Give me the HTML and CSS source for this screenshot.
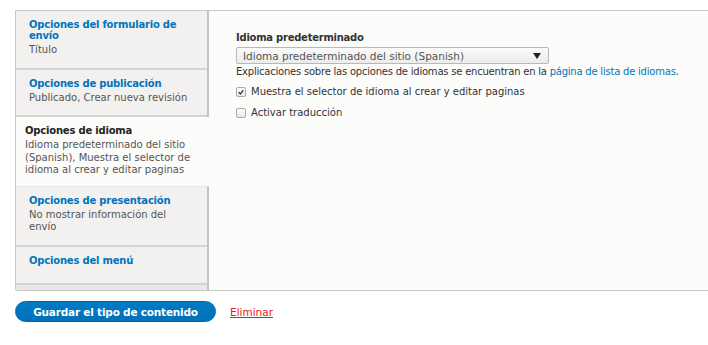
FILE: index.html
```html
<!DOCTYPE html>
<html lang="es">
<head>
<meta charset="utf-8">
<link rel="stylesheet" href="styles.css">
</head>
<body>
<div class="page">
  <div class="vtabs">
    <ul class="tabs">
      <li class="tab"><a class="tab-title" href="#">Opciones del formulario de envío</a><span class="tab-summary">Título</span></li>
      <li class="tab"><a class="tab-title" href="#">Opciones de publicación</a><span class="tab-summary">Publicado, Crear nueva revisión</span></li>
      <li class="tab active"><a class="tab-title" href="#">Opciones de idioma</a><span class="tab-summary">Idioma predeterminado del sitio (Spanish), Muestra el selector de idioma al crear y editar paginas</span></li>
      <li class="tab"><a class="tab-title" href="#">Opciones de presentación</a><span class="tab-summary">No mostrar información del envío</span></li>
      <li class="tab last"><a class="tab-title" href="#">Opciones del menú</a></li>
      <li class="tab-end"></li>
    </ul>
    <div class="pane">
      <label class="field-label">Idioma predeterminado</label>
      <div class="select"><span>Idioma predeterminado del sitio (Spanish)</span><span class="arrow"></span></div>
      <p class="desc">Explicaciones sobre las opciones de idiomas se encuentran en la <a href="#">página de lista de idiomas</a>.</p>
      <div class="check"><span class="box checked"><svg viewBox="0 0 10 10" width="8" height="8"><path d="M2 5.2 L4.2 7.4 L8 2.6" fill="none" stroke="#333" stroke-width="1.6"/></svg></span>Muestra el selector de idioma al crear y editar paginas</div>
      <div class="check"><span class="box"></span>Activar traducción</div>
    </div>
  </div>
  <div class="actions">
    <button class="btn">Guardar el tipo de contenido</button>
    <a class="delete" href="#">Eliminar</a>
  </div>
</div>
</body>
</html>
```
FILE: styles.css
```css
html, body { margin: 0; padding: 0; background: #fff; }
body { font-family: "DejaVu Sans", Verdana, sans-serif; font-size: 10px; color: #333; }
.page { padding: 10px 0 0 15px; }
.vtabs {
  display: flex;
  height: 279px;
  border: 1px solid #c8c8c8;
  border-right: none;
  border-bottom-left-radius: 3px;
  background: #fcfcfa;
  overflow: hidden;
}
.tabs {
  list-style: none; margin: 0; padding: 0;
  width: 191px;
  flex: none;
  display: flex; flex-direction: column;
  background: #f2f1ef;
  border-right: 2px solid #c4c4c4;
}
.tab {
  padding: 8px 14px 11px 13px;
  border-bottom: 2px solid #d4d4d2;
  display: flex; flex-direction: column;
}
.tab-title { color: #0074bd; font-weight: bold; font-size: 10px; letter-spacing: -0.2px; line-height: 11px; text-decoration: none; margin-bottom: 3px; }
.tab-summary { color: #555; line-height: 12.5px; }
.tab.active {
  background: #fcfcfa;
  margin-right: -2px;
  padding: 8px 14px 9px 9px;
  border-bottom: 1px solid #e4e4e2;
}
.tab.active .tab-title { color: #222; }
.tab.last { padding-bottom: 14px; }
.tab-end { flex: 1; background: #e9e8e6; }
.pane { flex: 1; padding: 20px 0 0 27px; }
.field-label { display: block; font-weight: bold; font-size: 10px; letter-spacing: -0.25px; color: #333; line-height: 14px; margin-bottom: 2px; }
.select {
  width: 298px; height: 15px;
  border: 1px solid #b9b9b9; border-radius: 2px;
  background: linear-gradient(#fbfbfb, #ececec);
  display: flex; align-items: center; justify-content: space-between;
  padding: 0 7px 0 6px;
  color: #555; font-size: 10.5px;
}
.arrow { width: 0; height: 0; border-left: 4px solid transparent; border-right: 4px solid transparent; border-top: 6px solid #222; }
.desc { margin: 1px 0 6px; line-height: 14px; color: #333; white-space: nowrap; letter-spacing: -0.22px; }
.desc a { color: #0074bd; text-decoration: none; }
.check { display: flex; align-items: center; line-height: 14px; margin-bottom: 7px; color: #333; }
.box {
  width: 8px; height: 8px; border: 1px solid #aaa; border-radius: 2px;
  background: linear-gradient(#fff, #e8e8e8);
  margin-right: 5px; display: flex; align-items: center; justify-content: center;
}
.actions { display: flex; align-items: center; margin-top: 10px; }
.btn {
  width: 201px; height: 21px;
  border: 1px solid #0066a1; border-radius: 11px;
  background: linear-gradient(#007bc6, #0071b8);
  color: #fff; font-family: inherit; font-weight: bold; font-size: 10.5px; letter-spacing: -0.2px;
  padding: 0;
}
.delete { margin-left: 14px; color: #e31c1c; font-size: 10.5px; }
```
